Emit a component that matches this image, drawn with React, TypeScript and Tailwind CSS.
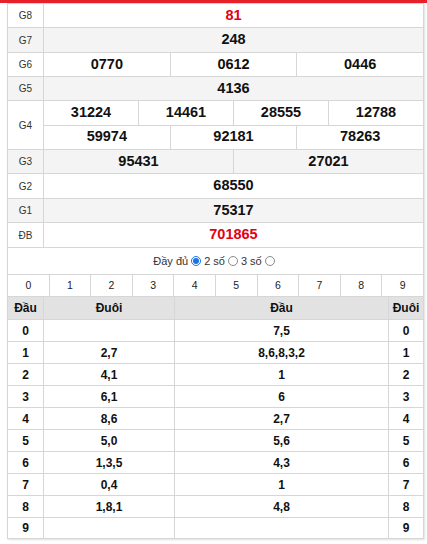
const prizes: { label: string; rows: string[][]; red?: boolean; h: string }[] = [
  { label: "G8", rows: [["81"]], red: true, h: "h-[24px]" },
  { label: "G7", rows: [["248"]], h: "h-[25px]" },
  { label: "G6", rows: [["0770", "0612", "0446"]], h: "h-[24px]" },
  { label: "G5", rows: [["4136"]], h: "h-[24px]" },
  {
    label: "G4",
    rows: [
      ["31224", "14461", "28555", "12788"],
      ["59974", "92181", "78263"],
    ],
    h: "h-[49px]",
  },
  { label: "G3", rows: [["95431", "27021"]], h: "h-[24px]" },
  { label: "G2", rows: [["68550"]], h: "h-[25px]" },
  { label: "G1", rows: [["75317"]], h: "h-[24px]" },
  { label: "ĐB", rows: [["701865"]], red: true, h: "h-[25px]" },
];

const loto = [
  { d: "0", tail: "", head: "7,5" },
  { d: "1", tail: "2,7", head: "8,6,8,3,2" },
  { d: "2", tail: "4,1", head: "1" },
  { d: "3", tail: "6,1", head: "6" },
  { d: "4", tail: "8,6", head: "2,7" },
  { d: "5", tail: "5,0", head: "5,6" },
  { d: "6", tail: "1,3,5", head: "4,3" },
  { d: "7", tail: "0,4", head: "1" },
  { d: "8", tail: "1,8,1", head: "4,8" },
  { d: "9", tail: "", head: "" },
];

function Radio({ checked }: { checked?: boolean }) {
  return (
    <span
      className={`inline-flex items-center justify-center w-[10px] h-[10px] rounded-full border mx-[3px] ${
        checked ? "border-[#1a73e8]" : "border-[#8a8a8a]"
      }`}
    >
      {checked && <span className="w-[6px] h-[6px] rounded-full bg-[#1a73e8]" />}
    </span>
  );
}

export default function App() {
  return (
    <div className="w-[427px] h-[544px] bg-white font-['Liberation_Sans',Arial,sans-serif] text-[#222]">
      <div className="h-[3px] bg-[#e8202a]" />

      <div className="ml-[7px] w-[417px] border border-[#d6d6d6] shadow-[1px_1px_2px_rgba(0,0,0,0.12)]">
        {/* Ket qua */}
        <div>
          {prizes.map((p, i) => (
            <div
              key={p.label}
              className={`flex border-b border-[#d6d6d6] ${p.h} ${
                i % 2 === 1 ? "bg-[#f4f4f4]" : "bg-white"
              }`}
            >
              <div className="w-[36px] shrink-0 border-r border-[#d6d6d6] flex items-center justify-center text-[10px] text-[#333]">
                {p.label}
              </div>
              <div className="flex-1 flex flex-col">
                {p.rows.map((r, ri) => (
                  <div
                    key={ri}
                    className={`flex flex-1 ${ri > 0 ? "border-t border-[#d6d6d6]" : ""}`}
                  >
                    {r.map((n, ni) => (
                      <div
                        key={n}
                        className={`flex-1 basis-0 flex items-center justify-center text-[14.5px] font-bold ${
                          ni > 0 ? "border-l border-[#d6d6d6]" : ""
                        } ${p.red ? "text-[#e3000f]" : "text-[#111]"}`}
                      >
                        {n}
                      </div>
                    ))}
                  </div>
                ))}
              </div>
            </div>
          ))}
        </div>

        {/* Chon so */}
        <div className="h-[26px] flex items-center justify-center text-[11px] text-[#333]">
          <span>Đầy đủ</span>
          <Radio checked />
          <span>2 số</span>
          <Radio />
          <span>3 số</span>
          <Radio />
        </div>

        <div className="flex h-[23px] border-t border-b border-[#d6d6d6] text-[10.5px] text-[#222]">
          {["0", "1", "2", "3", "4", "5", "6", "7", "8", "9"].map((d, i) => (
            <div
              key={d}
              className={`flex-1 basis-0 flex items-center justify-center ${
                i > 0 ? "border-l border-[#d6d6d6]" : ""
              }`}
            >
              {d}
            </div>
          ))}
        </div>

        {/* Loto */}
        <div className="text-[12px] font-bold text-[#111]">
          <div className="flex h-[23px] bg-[#e2e2e2] border-b border-[#d6d6d6]">
            <div className="w-[36px] border-r border-[#d6d6d6] flex items-center justify-center">Đầu</div>
            <div className="w-[131px] border-r border-[#d6d6d6] flex items-center justify-center">Đuôi</div>
            <div className="w-[214px] border-r border-[#d6d6d6] flex items-center justify-center">Đầu</div>
            <div className="flex-1 flex items-center justify-center">Đuôi</div>
          </div>
          {loto.map((r) => (
            <div key={r.d} className="flex h-[22px] border-b last:border-b-0 last:h-[20px] border-[#d6d6d6]">
              <div className="w-[36px] border-r border-[#d6d6d6] flex items-center justify-center">{r.d}</div>
              <div className="w-[131px] border-r border-[#d6d6d6] flex items-center justify-center">{r.tail}</div>
              <div className="w-[214px] border-r border-[#d6d6d6] flex items-center justify-center">{r.head}</div>
              <div className="flex-1 flex items-center justify-center">{r.d}</div>
            </div>
          ))}
        </div>
      </div>
    </div>
  );
}
